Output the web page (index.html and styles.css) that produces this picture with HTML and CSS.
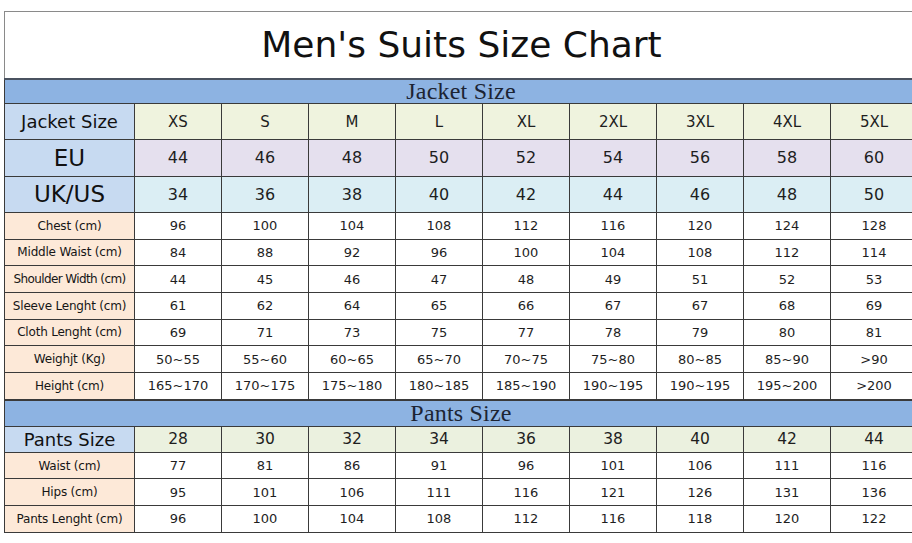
FILE: index.html
```html
<!DOCTYPE html>
<html>
<head>
<meta charset="utf-8">
<title>Men's Suits Size Chart</title>
<link rel="stylesheet" href="styles.css">
</head>
<body>
<div class="page">
  <div class="title-box"><h1 class="title">Men's Suits Size Chart</h1></div>
  <table class="chart">
    <colgroup>
      <col class="c-label"><col class="c-val"><col class="c-val"><col class="c-val"><col class="c-val"><col class="c-val"><col class="c-val"><col class="c-val"><col class="c-val"><col class="c-val">
    </colgroup>
    <tbody>
      <tr class="section"><td colspan="10">Jacket Size</td></tr>
      <tr class="big size-row"><th class="lab-blue lab-mid">Jacket Size</th><td>XS</td><td>S</td><td>M</td><td>L</td><td>XL</td><td>2XL</td><td>3XL</td><td>4XL</td><td>5XL</td></tr>
      <tr class="big eu-row"><th class="lab-blue lab-big">EU</th><td>44</td><td>46</td><td>48</td><td>50</td><td>52</td><td>54</td><td>56</td><td>58</td><td>60</td></tr>
      <tr class="big uk-row"><th class="lab-blue lab-big">UK/US</th><td>34</td><td>36</td><td>38</td><td>40</td><td>42</td><td>44</td><td>46</td><td>48</td><td>50</td></tr>
      <tr class="m"><th>Chest (cm)</th><td>96</td><td>100</td><td>104</td><td>108</td><td>112</td><td>116</td><td>120</td><td>124</td><td>128</td></tr>
      <tr class="m"><th>Middle Waist (cm)</th><td>84</td><td>88</td><td>92</td><td>96</td><td>100</td><td>104</td><td>108</td><td>112</td><td>114</td></tr>
      <tr class="m"><th class="tight">Shoulder Width (cm)</th><td>44</td><td>45</td><td>46</td><td>47</td><td>48</td><td>49</td><td>51</td><td>52</td><td>53</td></tr>
      <tr class="m"><th>Sleeve Lenght (cm)</th><td>61</td><td>62</td><td>64</td><td>65</td><td>66</td><td>67</td><td>67</td><td>68</td><td>69</td></tr>
      <tr class="m"><th>Cloth Lenght (cm)</th><td>69</td><td>71</td><td>73</td><td>75</td><td>77</td><td>78</td><td>79</td><td>80</td><td>81</td></tr>
      <tr class="m"><th>Weighjt (Kg)</th><td>50~55</td><td>55~60</td><td>60~65</td><td>65~70</td><td>70~75</td><td>75~80</td><td>80~85</td><td>85~90</td><td>&gt;90</td></tr>
      <tr class="m last"><th>Height (cm)</th><td>165~170</td><td>170~175</td><td>175~180</td><td>180~185</td><td>185~190</td><td>190~195</td><td>190~195</td><td>195~200</td><td>&gt;200</td></tr>
      <tr class="section pants"><td colspan="10">Pants Size</td></tr>
      <tr class="p-size"><th class="lab-blue lab-mid2">Pants Size</th><td>28</td><td>30</td><td>32</td><td>34</td><td>36</td><td>38</td><td>40</td><td>42</td><td>44</td></tr>
      <tr class="m"><th>Waist (cm)</th><td>77</td><td>81</td><td>86</td><td>91</td><td>96</td><td>101</td><td>106</td><td>111</td><td>116</td></tr>
      <tr class="m"><th>Hips (cm)</th><td>95</td><td>101</td><td>106</td><td>111</td><td>116</td><td>121</td><td>126</td><td>131</td><td>136</td></tr>
      <tr class="m"><th>Pants Lenght (cm)</th><td>96</td><td>100</td><td>104</td><td>108</td><td>112</td><td>116</td><td>118</td><td>120</td><td>122</td></tr>
    </tbody>
  </table>
</div>
</body>
</html>
```
FILE: styles.css
```css
html, body {
  margin: 0;
  padding: 0;
  background: #ffffff;
  overflow: hidden;
}
.page {
  width: 914px;
  padding: 11px 0 0 4px;
  font-family: "DejaVu Sans", "Noto Sans", sans-serif;
  color: #1e1e1e;
}
.title-box {
  box-sizing: border-box;
  height: 67px;
  border-top: 1px solid #8a8a8a;
  border-left: 1px solid #8a8a8a;
  display: flex;
  align-items: center;
  justify-content: center;
}
.title {
  margin: 0;
  padding-bottom: 2px;
  font-family: "DejaVu Sans", sans-serif;
  font-weight: normal;
  font-size: 36px;
  letter-spacing: 0;
  color: #111;
}
.chart {
  width: 914px;
  border-collapse: collapse;
  table-layout: fixed;
}
.c-label { width: 130px; }
.c-val { width: 87px; }
.chart td, .chart th {
  border: 1px solid #3a3a3a;
  padding: 0;
  text-align: center;
  vertical-align: middle;
  font-weight: normal;
  white-space: nowrap;
  overflow: hidden;
}
.chart .section td {
  background: #8db3e2;
  height: 23px;
  line-height: 23px;
  overflow: visible;
  font-family: "Liberation Serif", serif;
  font-size: 24px;
  letter-spacing: 0.2px;
  color: #1c2433;
  border-top: 2px solid #4a5260;
  border-bottom: 1px solid #3a3a3a;
}
.chart .section.pants td {
  height: 25px;
  line-height: 25px;
  border-top: 2px solid #3a3a3a;
}
.big th, .big td { height: 35.3px; }
.size-row td { background: #eff3de; font-size: 15px; }
.eu-row td { background: #e5e0ee; font-size: 16px; }
.uk-row td { background: #dbeef4; font-size: 16px; }
.lab-blue { background: #c7daf1; color: #111; }
.lab-mid { font-size: 18px; }
.lab-big { font-size: 23px; }
.lab-mid2 { font-size: 18px; }
.m th, .m td { height: 25.7px; }
.m th {
  background: #fde9d8;
  font-size: 12px;
  letter-spacing: -0.2px;
  color: #161616;
}
.m th.tight { font-size: 12px; letter-spacing: -0.6px; }
.m td {
  background: #ffffff;
  font-size: 13px;
}
.p-size th, .p-size td { height: 25px; }
.p-size td { background: #ebf1df; font-size: 15.5px; }
```
